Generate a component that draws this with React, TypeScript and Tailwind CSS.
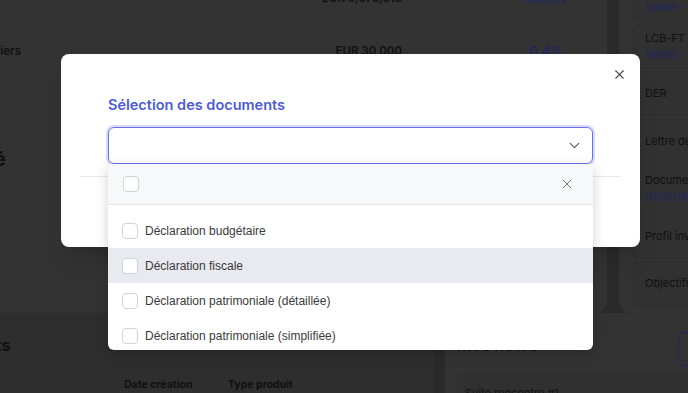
import { ChevronDown, X } from 'lucide-react';

const rightItems = [
  { title: 'Mandat de gestion', sub: 'Validé - 10/01/2024' },
  { title: 'LCB-FT / KYC', sub: 'Validé - 10/01/2024' },
  { title: 'DER' },
  { title: 'Lettre de mission' },
  { title: 'Document d’entrée', sub: '01/01/1970' },
  { title: 'Profil investisseur' },
  { title: 'Objectifs' },
];

const options = [
  'Déclaration budgétaire',
  'Déclaration fiscale',
  'Déclaration patrimoniale (détaillée)',
  'Déclaration patrimoniale (simplifiée)',
];

const Checkbox = () => (
  <span className="w-4 h-4 shrink-0 rounded-[4px] border border-[#cfd2d8] bg-white" />
);

// dashboard behind the dimmed overlay, painted directly in its dimmed colours
const Backdrop = () => {
  return (
    <div className="w-full h-full flex flex-col bg-[#2a2a2a] text-[#101010]">
      <div className="flex gap-3 h-[313px] shrink-0">
        {/* table card */}
        <div className="w-[607px] shrink-0 bg-[#333333] rounded-br-xl -mt-6 overflow-hidden text-[11.5px] font-semibold">
          <div className="h-[46px] flex items-center border-b border-[#2f2f2f]">
            <span className="w-[402px] shrink-0 text-right">EUR 6,673,318</span>
            <span className="w-[288px] shrink-0 text-center text-[#1f2660] text-[13px]">98.2%</span>
          </div>
          <div className="h-[60px] flex items-center">
            <span className="w-[120px] shrink-0 -ml-[99px] text-right">Actifs financiers</span>
            <span className="w-[381px] shrink-0 text-right">EUR 30,000</span>
            <span className="w-[288px] shrink-0 text-center text-[#1f2660] text-[13px]">0.4%</span>
          </div>
          <div className="mt-[62px] flex">
            <span className="w-[100px] shrink-0 -ml-[94px] text-right text-[20px] font-bold">Validé</span>
          </div>
        </div>
        {/* documents card */}
        <div className="flex-1 min-w-0 bg-[#333333] rounded-bl-xl -mt-6 pl-[13px] flex flex-col gap-[2.5px]">
          {rightItems.map((it) => (
            <div key={it.title} className="h-[45px] shrink-0 rounded-l-lg bg-[#313131] border border-r-0 border-[#2e2e2e] pl-3 flex flex-col justify-center text-[11px] whitespace-nowrap overflow-hidden">
              <span>{it.title}</span>
              {it.sub && <span className="text-[#1f2660]">{it.sub}</span>}
            </div>
          ))}
        </div>
      </div>
      <div className="flex gap-[11px] flex-1">
        <div className="w-[434px] shrink-0 bg-[#2e2e2e] pt-[22px]">
          <div className="-ml-[92px] text-[16px] font-bold leading-5">Mes contrats</div>
          <div className="flex mt-[22px] text-[10.5px] font-bold">
            <span className="w-[104px] ml-[124px]">Date création</span>
            <span>Type produit</span>
          </div>
        </div>
        <div className="flex-1 bg-[#333333] pl-3 pt-[22px]">
          <div className="flex items-center justify-between h-5">
            <span className="text-[16px] font-bold">Mes notes</span>
            <span className="w-[40px] h-[34px] rounded-md border border-[#1f2660] -mr-[30px] mt-2" />
          </div>
          <div className="mt-[18px] h-[30px] bg-[#303030] rounded-md pl-2 pt-[12px] text-[11px]">Suite rencontre #1</div>
        </div>
      </div>
    </div>
  );
};

export default function App() {
  return (
    <div className="w-[688px] h-[393px] relative overflow-hidden font-['Inter',sans-serif]">
      <Backdrop />

      {/* modal */}
      <div className="absolute left-[61px] top-[54px] w-[579px] h-[193px] bg-white rounded-lg shadow-xl">
        <button className="absolute right-[13px] top-[13px] text-[#4b4b4b]">
          <X size={15} strokeWidth={1.8} />
        </button>
        <div className="pl-[47px] pr-[47px] pt-[41px]">
          <h2 className="text-[14.5px] font-semibold text-[#4c5bd4] leading-5">Sélection des documents</h2>
          <div className="mt-[12px] h-[37px] rounded-md border border-[#6a6ff0] ring-2 ring-[#d7d9ff] flex items-center justify-end pr-[9px] text-[#555]">
            <ChevronDown size={17} strokeWidth={1.5} />
          </div>
        </div>
        <div className="mx-[19px] mt-[12px] border-t border-[#e6e8ee]" />
      </div>

      {/* dropdown */}
      <div className="absolute left-[108px] top-[164px] w-[485px] h-[186px] bg-white rounded-b-md shadow-[0_4px_14px_rgba(0,0,0,0.18)] overflow-hidden font-['Liberation_Sans',sans-serif] text-[12px] text-[#3a3a3a]">
        <div className="h-[41px] bg-[#f7f8fa] border-b border-[#e3e5ea] flex items-center justify-between pl-[15px] pr-[18px]">
          <Checkbox />
          <X size={16} strokeWidth={1.4} className="text-[#6b6b6b]" />
        </div>
        <div className="pt-[8px]">
          {options.map((o, i) => (
            <div key={o} className={`h-[35px] flex items-center gap-[7px] pl-[14px] ${i === 1 ? 'bg-[#e8eaef]' : ''}`}>
              <Checkbox />
              <span>{o}</span>
            </div>
          ))}
        </div>
      </div>
    </div>
  );
}
